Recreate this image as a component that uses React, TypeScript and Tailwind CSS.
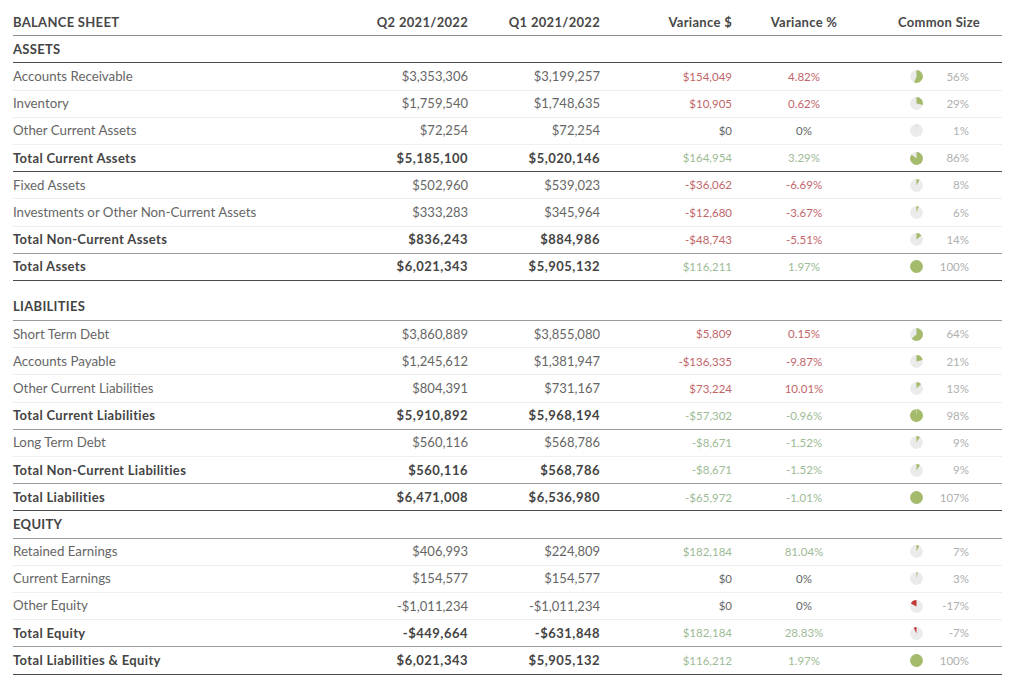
type Tone = "red" | "green" | "plain";
type Line = "light" | "mid" | "dark";

type Row = {
  label: string;
  q2: string;
  q1: string;
  varD: string;
  varP: string;
  tone: Tone;
  size: number;
  bold?: boolean;
  line?: Line;
};

const lineClass: Record<Line, string> = {
  light: "border-[#eeeeee]",
  mid: "border-[#9a9a9a]",
  dark: "border-[#4a4a4a]",
};

const toneClass: Record<Tone, string> = {
  red: "text-[#c2666a]",
  green: "text-[#9dbb96]",
  plain: "text-[#666666]",
};

const gridClass = "grid h-[27.2px] grid-cols-[323px_132px_132px_132px_144px_126px] items-center border-b";

const assets: Row[] = [
  { label: "Accounts Receivable", q2: "$3,353,306", q1: "$3,199,257", varD: "$154,049", varP: "4.82%", tone: "red", size: 56 },
  { label: "Inventory", q2: "$1,759,540", q1: "$1,748,635", varD: "$10,905", varP: "0.62%", tone: "red", size: 29 },
  { label: "Other Current Assets", q2: "$72,254", q1: "$72,254", varD: "$0", varP: "0%", tone: "plain", size: 1 },
  { label: "Total Current Assets", q2: "$5,185,100", q1: "$5,020,146", varD: "$164,954", varP: "3.29%", tone: "green", size: 86, bold: true, line: "dark" },
  { label: "Fixed Assets", q2: "$502,960", q1: "$539,023", varD: "-$36,062", varP: "-6.69%", tone: "red", size: 8 },
  { label: "Investments or Other Non-Current Assets", q2: "$333,283", q1: "$345,964", varD: "-$12,680", varP: "-3.67%", tone: "red", size: 6 },
  { label: "Total Non-Current Assets", q2: "$836,243", q1: "$884,986", varD: "-$48,743", varP: "-5.51%", tone: "red", size: 14, bold: true, line: "mid" },
  { label: "Total Assets", q2: "$6,021,343", q1: "$5,905,132", varD: "$116,211", varP: "1.97%", tone: "green", size: 100, bold: true, line: "dark" },
];

const liabilities: Row[] = [
  { label: "Short Term Debt", q2: "$3,860,889", q1: "$3,855,080", varD: "$5,809", varP: "0.15%", tone: "red", size: 64 },
  { label: "Accounts Payable", q2: "$1,245,612", q1: "$1,381,947", varD: "-$136,335", varP: "-9.87%", tone: "red", size: 21 },
  { label: "Other Current Liabilities", q2: "$804,391", q1: "$731,167", varD: "$73,224", varP: "10.01%", tone: "red", size: 13 },
  { label: "Total Current Liabilities", q2: "$5,910,892", q1: "$5,968,194", varD: "-$57,302", varP: "-0.96%", tone: "green", size: 98, bold: true, line: "mid" },
  { label: "Long Term Debt", q2: "$560,116", q1: "$568,786", varD: "-$8,671", varP: "-1.52%", tone: "green", size: 9 },
  { label: "Total Non-Current Liabilities", q2: "$560,116", q1: "$568,786", varD: "-$8,671", varP: "-1.52%", tone: "green", size: 9, bold: true, line: "mid" },
  { label: "Total Liabilities", q2: "$6,471,008", q1: "$6,536,980", varD: "-$65,972", varP: "-1.01%", tone: "green", size: 107, bold: true, line: "dark" },
];

const equity: Row[] = [
  { label: "Retained Earnings", q2: "$406,993", q1: "$224,809", varD: "$182,184", varP: "81.04%", tone: "green", size: 7 },
  { label: "Current Earnings", q2: "$154,577", q1: "$154,577", varD: "$0", varP: "0%", tone: "plain", size: 3 },
  { label: "Other Equity", q2: "-$1,011,234", q1: "-$1,011,234", varD: "$0", varP: "0%", tone: "plain", size: -17 },
  { label: "Total Equity", q2: "-$449,664", q1: "-$631,848", varD: "$182,184", varP: "28.83%", tone: "green", size: -7, bold: true, line: "mid" },
  { label: "Total Liabilities & Equity", q2: "$6,021,343", q1: "$5,905,132", varD: "$116,212", varP: "1.97%", tone: "green", size: 100, bold: true, line: "dark" },
];

function Pie({ size }: { size: number }) {
  const r = 6.4;
  const c = 6.5;
  const frac = Math.min(Math.abs(size), 100) / 100;
  const color = size < 0 ? "#bf3a36" : "#a5bb6c";
  const sign = size < 0 ? -1 : 1;
  const a = frac * 2 * Math.PI;
  const x = c + sign * r * Math.sin(a);
  const y = c - r * Math.cos(a);

  return (
    <svg width="13" height="13" viewBox="0 0 13 13" className="shrink-0">
      <circle cx={c} cy={c} r={r} fill="#ebebeb" />
      {frac >= 1 ? (
        <circle cx={c} cy={c} r={r} fill={color} />
      ) : (
        <path
          d={`M${c} ${c}L${c} ${c - r}A${r} ${r} 0 ${frac > 0.5 ? 1 : 0} ${size < 0 ? 0 : 1} ${x} ${y}Z`}
          fill={color}
        />
      )}
    </svg>
  );
}

function SectionHead({ title, line }: { title: string; line: Line }) {
  return (
    <div className={`flex h-[27.2px] items-center border-b font-bold tracking-[0.3px] text-[#444444] ${lineClass[line]}`}>
      {title}
    </div>
  );
}

function TableRow({ row }: { row: Row }) {
  const label = row.bold ? "font-bold tracking-[0.35px] text-[#444444]" : "text-[13.3px] text-[#666666]";
  const money = row.bold ? "font-bold tracking-[0.5px] text-[#444444]" : "text-[#666666]";
  return (
    <div className={`${gridClass} ${lineClass[row.line ?? "light"]}`}>
      <div className={label}>{row.label}</div>
      <div className={`text-right ${money}`}>{row.q2}</div>
      <div className={`text-right ${money}`}>{row.q1}</div>
      <div className={`text-right text-[11.5px] ${toneClass[row.tone]}`}>{row.varD}</div>
      <div className={`text-center text-[11.5px] ${toneClass[row.tone]}`}>{row.varP}</div>
      <div className="flex items-center justify-between pl-[34px] pr-[33px]">
        <Pie size={row.size} />
        <span className="text-[11.5px] text-[#b0b0b0]">{row.size}%</span>
      </div>
    </div>
  );
}

export default function App() {
  return (
    <div className="h-[687px] w-[1024px] overflow-hidden bg-white pl-[13px] pt-[9px] font-['Lato',sans-serif] text-[13px] leading-none">
      <div className="w-[989px]">
        <div className={`${gridClass} border-[#8c8c8c] font-bold tracking-[0.3px] text-[#484848]`}>
          <div>BALANCE SHEET</div>
          <div className="text-right">Q2 2021/2022</div>
          <div className="text-right">Q1 2021/2022</div>
          <div className="text-right">Variance $</div>
          <div className="text-center">Variance %</div>
          <div className="text-center">Common Size</div>
        </div>

        <SectionHead title="ASSETS" line="dark" />
        {assets.map((row) => (
          <TableRow key={row.label} row={row} />
        ))}

        <div className="mt-[13px]">
          <SectionHead title="LIABILITIES" line="mid" />
          {liabilities.map((row) => (
            <TableRow key={row.label} row={row} />
          ))}
        </div>

        <SectionHead title="EQUITY" line="mid" />
        {equity.map((row) => (
          <TableRow key={row.label} row={row} />
        ))}
      </div>
    </div>
  );
}
